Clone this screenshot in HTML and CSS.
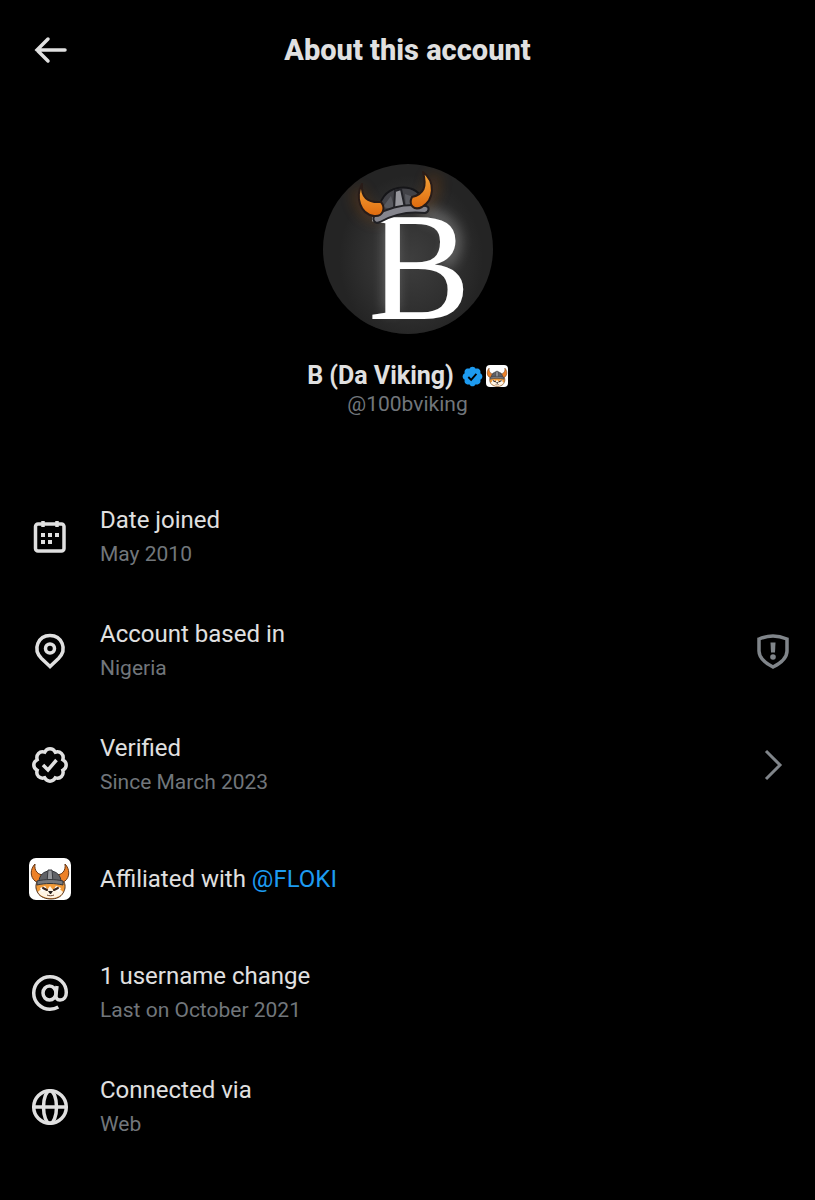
FILE: index.html
```html
<!DOCTYPE html>
<html lang="en">
<head>
<meta charset="utf-8">
<meta name="viewport" content="width=device-width, initial-scale=1">
<title>About this account</title>
<link rel="stylesheet" href="styles.css">
</head>
<body>
<svg class="defs" aria-hidden="true">
  <defs>
    <symbol id="seal" viewBox="0 0 22 22" overflow="visible"><path d="M20.396 11c-.018-.646-.215-1.275-.57-1.816-.354-.54-.852-.972-1.438-1.246.223-.607.27-1.264.14-1.897-.131-.634-.437-1.218-.882-1.687-.47-.445-1.053-.75-1.687-.882-.633-.13-1.29-.083-1.897.14-.273-.587-.704-1.086-1.245-1.44S11.647 1.62 11 1.604c-.646.017-1.273.213-1.813.568s-.969.854-1.24 1.44c-.608-.223-1.267-.272-1.902-.14-.635.13-1.22.436-1.69.882-.445.47-.749 1.055-.878 1.688-.13.633-.08 1.29.144 1.896-.587.274-1.087.705-1.443 1.245-.356.54-.555 1.17-.574 1.817.02.647.218 1.276.574 1.817.356.54.856.972 1.443 1.245-.224.606-.274 1.263-.144 1.896.13.634.433 1.218.877 1.688.47.443 1.054.747 1.687.878.633.132 1.29.084 1.897-.136.274.586.705 1.084 1.246 1.439.54.354 1.17.551 1.816.569.647-.016 1.276-.213 1.817-.567s.972-.854 1.245-1.44c.604.239 1.266.296 1.903.164.636-.132 1.22-.447 1.68-.907.46-.46.776-1.044.908-1.681s.075-1.299-.165-1.903c.586-.274 1.084-.705 1.439-1.246.354-.54.551-1.17.569-1.816z"/></symbol>
    <symbol id="floki" viewBox="0 0 42 42">
      <rect width="42" height="42" fill="#fff"/>
      <path d="M8 24c-2 4-1 8 1 11 2 4 8 6 13 6s10-2 12-6c2-3 3-7 1-11z" fill="#f19a38" stroke="#4a2f20" stroke-width="1"/>
      <path d="M9 34c2-3 6-4 9-2l3-4 3 4c3-2 8-1 10 2-2 4-7 6-12 6s-11-2-13-6z" fill="#fff4e4"/>
      <path d="M11 30l5-2 2 3-5 3zM32 30l-5-2-2 3 5 3z" fill="#fff"/>
      <path d="M14 30l4 2M29 30l-4 2" stroke="#38241c" stroke-width="2" stroke-linecap="round"/>
      <path d="M19 33h5l-2 3h-1z" fill="#241d1d"/>
      <path d="M18 37c2 1 5 1 7 0" fill="none" stroke="#6b4330"/>
      <path d="M6 6C1 11 1 19 6 23c3 2 7 1 8-2l1-4c-6 0-10-4-9-11z" fill="#ed8128" stroke="#633515"/>
      <path d="M36 6c5 5 5 13 0 17-3 2-7 1-8-2l-1-4c6 0 10-4 9-11z" fill="#ed8128" stroke="#633515"/>
      <path d="M10 24c0-7 5-11 11-11s11 4 11 11z" fill="#606166" stroke="#303137"/>
      <path d="M19 12h4l1 12h-6z" fill="#96979b" stroke="#38393e"/>
      <path d="M8 23c8-2 18-2 26 0v4c-8-2-18-2-26 0z" fill="#77787c" stroke="#35363a"/>
    </symbol>
    <radialGradient id="glow"><stop offset="0" stop-color="#585858"/><stop offset=".6" stop-color="#3c3c3c"/><stop offset="1" stop-color="#242424"/></radialGradient>
    <linearGradient id="horn" x1="0" y1="0" x2="0" y2="1"><stop offset="0" stop-color="#f7a83b"/><stop offset="1" stop-color="#df6a0e"/></linearGradient>
    <filter id="soft" x="-50%" y="-50%" width="200%" height="200%"><feGaussianBlur stdDeviation="7"/></filter>
    <clipPath id="round"><circle cx="85" cy="85" r="85"/></clipPath>
  </defs>
</svg>

<header class="topbar">
  <button class="back" aria-label="Back">
    <svg class="icon" viewBox="0 0 42 42"><path d="M36 21H8M19 10L8 21l11 11" class="line"/></svg>
  </button>
  <h1 class="heading">About this account</h1>
</header>

<main>
  <section class="profile">
    <svg class="avatar" viewBox="0 0 170 170" role="img" aria-label="Profile picture">
      <g clip-path="url(#round)">
        <rect width="170" height="170" fill="#242424"/>
        <ellipse cx="88" cy="95" rx="72" ry="84" fill="url(#glow)" opacity=".5"/>
        <path d="M37 25c-4 14 8 28 20 27M109 11c5 15-4 26-12 31" fill="none" stroke="#a75208" stroke-width="12" filter="url(#soft)" opacity=".3"/>
        <path d="M68 58v90M100 50c40 4 36 40 20 50" fill="none" stroke="#fff" stroke-width="10" filter="url(#soft)" opacity=".35"/>
      </g>
      <text x="45" y="155" class="initial">B</text>
      <path d="M55 50c1-14 8-24 20-26 14-2 25 4 27 19z" fill="#424247" stroke="#151518" stroke-width="2"/>
      <path d="M60 43l8-11 4 14zM82 30l14 5 2 9-15 2z" fill="#595a60"/>
      <path d="M72 27l6-2 4 19-11 2z" fill="#96969c" stroke="#222227" stroke-width="2"/>
      <path d="M53 51c14-8 32-12 50-9 4 1 3 6-1 7-16-2-31 1-45 9-6 3-9-4-4-7z" fill="#85858d" stroke="#202024" stroke-width="2"/>
      <path d="M39 20C32 33 37 50 51 52c9 1 12-8 7-14-14 1-20-5-19-18z" fill="url(#horn)" stroke="#291c18" stroke-width="2" stroke-linejoin="round"/>
      <path d="M100 8c13 10 11 28-1 35-8 4-14-2-10-10 12-3 15-10 11-25z" fill="url(#horn)" stroke="#291c18" stroke-width="2" stroke-linejoin="round"/>
    </svg>
    <div class="name-row">
      <h2 class="name">B (Da Viking)</h2>
      <span class="badges">
        <svg class="verified" viewBox="1 1 20 20" role="img" aria-label="Verified"><use href="#seal" width="22" height="22" fill="#1d9bf0"/><path d="M7 11.5l2.7 2.700 5-5.700" fill="none" stroke="#000" stroke-width="1.8"/></svg>
        <svg class="mini-logo" role="img" aria-label="FLOKI"><use href="#floki"/></svg>
      </span>
    </div>
    <p class="handle">@100bviking</p>
  </section>

  <ul class="facts">
    <li class="fact">
      <svg class="icon" viewBox="0 0 42 42" aria-hidden="true"><rect x="6.500" y="8" width="28.500" height="27" rx="2.500" class="line"/><path d="M14 5v6M28 5v6" class="line"/><path d="M12 17h4v4h-4zM19 17h4v4h-4zM26 17h4v4h-4zM12 24h4v4h-4zM19 24h4v4h-4z" fill="currentColor"/></svg>
      <div class="text"><p class="title">Date joined</p><p class="detail">May 2010</p></div>
    </li>
    <li class="fact">
      <svg class="icon" viewBox="0 0 42 42" aria-hidden="true"><path d="M21 36.500L12.500 28.500C3 19 9.500 5.500 21 5.500S39 19 29.500 28.500z" class="line"/><circle cx="21" cy="18.500" r="4.500" class="line"/></svg>
      <div class="text"><p class="title">Account based in</p><p class="detail">Nigeria</p></div>
      <button class="action" aria-label="Location details"><svg class="icon" viewBox="0 0 42 42"><path d="M21 6c5 0 9 1 14 3v12c0 7-6 12-14 16C13 33 7 28 7 21V9c5-2 9-3 14-3z" class="line"/><path d="M18.500 12.500h5l-.5 10h-4z" fill="currentColor"/><circle cx="21" cy="27" r="2.800" fill="currentColor"/></svg></button>
    </li>
    <li class="fact">
      <svg class="icon" viewBox="0 0 42 42" aria-hidden="true"><path d="M21 4.800q3.500 0 5.300 3.400 3.700-1.100 6.200 1.300t1.300 6.200Q37.200 17.500 37.200 21t-3.400 5.300q1.100 3.700-1.300 6.200t-6.200 1.300Q24.500 37.200 21 37.200t-5.300-3.400q-3.700 1.100-6.200-1.300t-1.300-6.200Q4.800 24.500 4.800 21t3.400-5.300Q7.100 12 9.500 9.500t6.200-1.300Q17.500 4.800 21 4.800z" class="line"/><path d="M14 21l5 5 8.500-10" class="line"/></svg>
      <div class="text"><p class="title">Verified</p><p class="detail">Since March 2023</p></div>
      <button class="action" aria-label="Verification details"><svg class="icon" viewBox="0 0 42 42"><path d="M14 7l14 14-14 14" fill="none" stroke="currentColor" stroke-width="3"/></svg></button>
    </li>
    <li class="fact">
      <svg class="icon logo" aria-hidden="true"><use href="#floki"/></svg>
      <div class="text"><p class="title">Affiliated with <a class="link" href="#floki">@FLOKI</a></p></div>
    </li>
    <li class="fact">
      <svg class="icon" viewBox="0 0 42 42" aria-hidden="true"><ellipse cx="20.500" cy="21" rx="6.500" ry="7" class="line"/><path d="M28 14l-1 8c-.6 4 1 6 4 6 4 0 6.300-3 6.300-7.500C37.300 11.500 30 4.700 21 4.700S4.700 12 4.700 21 12 37.300 21 37.300c3 0 6-.8 8.300-2.200" class="line"/></svg>
      <div class="text"><p class="title">1 username change</p><p class="detail">Last on October 2021</p></div>
    </li>
    <li class="fact">
      <svg class="icon" viewBox="0 0 42 42" aria-hidden="true"><circle cx="21" cy="21" r="16.300" class="line"/><ellipse cx="21" cy="21" rx="6.500" ry="16.300" class="line"/><path d="M5 21h32" class="line"/></svg>
      <div class="text"><p class="title">Connected via</p><p class="detail">Web</p></div>
    </li>
  </ul>
</main>
</body>
</html>
```
FILE: styles.css
```css
* { box-sizing: border-box; }

body {
  margin: 0;
  background: #000;
  color: #e0e0e0;
  font-family: Roboto, "Liberation Sans", sans-serif;
}

h1, h2, p, ul { margin: 0; padding: 0; }

button {
  display: flex;
  padding: 0;
  border: 0;
  background: none;
  color: inherit;
  cursor: pointer;
}

.defs { display: block; width: 0; height: 0; }

.icon {
  display: block;
  flex: none;
  width: 42px;
  height: 42px;
}

.line {
  fill: none;
  stroke: currentColor;
  stroke-width: 3.5;
}

.back .line { stroke-linecap: round; }

.topbar {
  display: grid;
  grid-template-columns: 42px 1fr 42px;
  align-items: center;
  height: 100px;
  padding: 0 29px;
}

.heading {
  font-size: 29px;
  line-height: 36px;
  font-weight: 800;
  text-align: center;
}

.profile {
  display: flex;
  flex-direction: column;
  align-items: center;
  padding: 64px 24px 62px;
}

.avatar {
  width: 170px;
  height: 170px;
  overflow: visible;
}

.initial {
  font-family: "Liberation Serif", serif;
  font-size: 154px;
  fill: #fff;
}

.name-row {
  display: flex;
  align-items: center;
  gap: 8px;
  margin-top: 28px;
}

.name {
  font-size: 25px;
  line-height: 28px;
  font-weight: 700;
}

.badges { display: flex; align-items: center; gap: 3px; }
.verified { width: 21px; height: 21px; }
.mini-logo { width: 22px; height: 22px; border-radius: 4px; }

.handle {
  color: #71767b;
  font-size: 21px;
  line-height: 28px;
}

.facts { list-style: none; }

.fact {
  display: flex;
  align-items: center;
  gap: 29px;
  min-height: 114px;
  padding: 20px 21px 20px 29px;
}

.text { flex: 1; }

.title { font-size: 24px; line-height: 34px; }

.detail {
  color: #71767b;
  font-size: 21px;
  line-height: 34px;
}

.action { color: #80858a; }
.logo { border-radius: 7px; }
.link { color: #1d9bf0; text-decoration: none; }
```
